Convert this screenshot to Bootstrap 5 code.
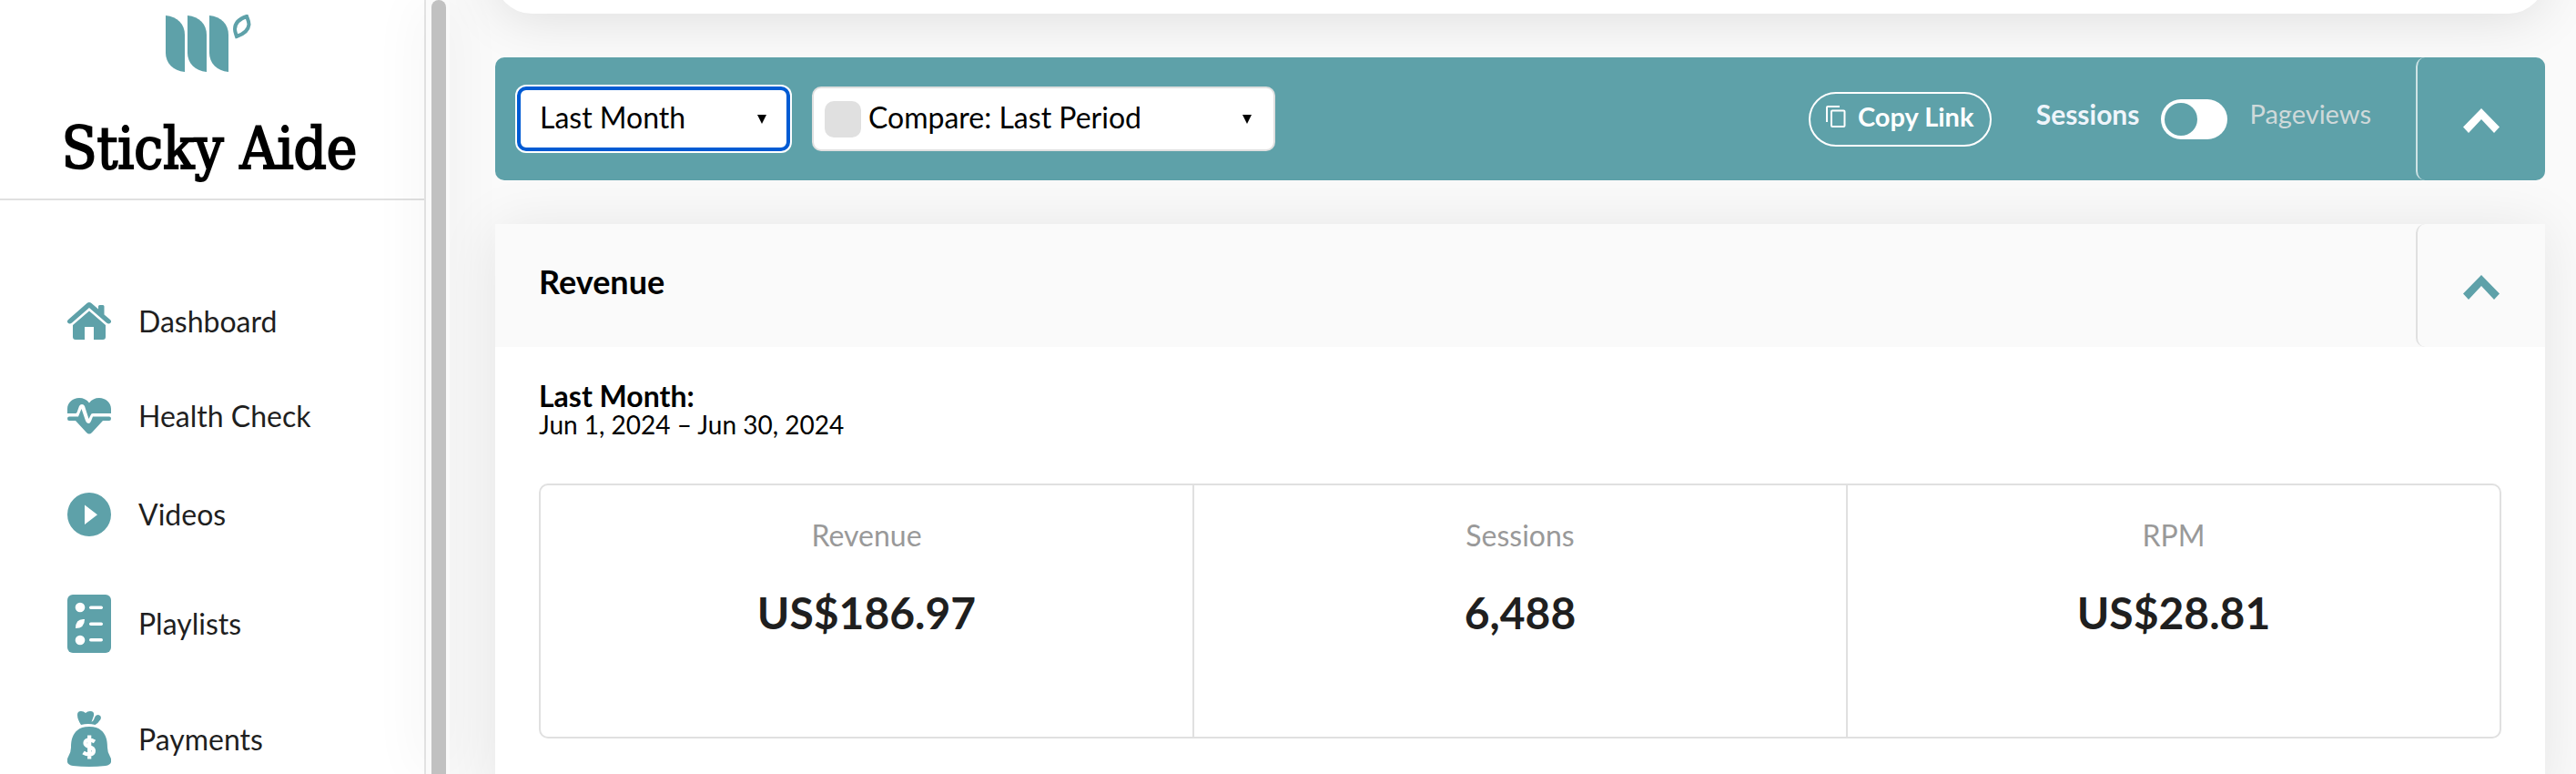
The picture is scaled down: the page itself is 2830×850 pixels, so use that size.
<!DOCTYPE html>
<html lang="en">
<head>
<meta charset="utf-8">
<meta name="viewport" content="width=device-width, initial-scale=1">
<title>Sticky Aide – Dashboard</title>
<link href="https://cdn.jsdelivr.net/npm/bootstrap@5.3.0/dist/css/bootstrap.min.css" rel="stylesheet">
<style>
  :root { --teal: #5ea1a9; --line: #e0e0e0; --ink: #1f1f1f; --soft: #fafafa; }
  body { font-family: Lato, sans-serif; font-size: 32px; line-height: 40px; color: #000; background: var(--soft); }

  /* Sidebar */
  .side { width: 468px; border-right: 2px solid #e5e5e5; }
  .side-head { border-bottom: 2px solid var(--line); padding: 16px 6px 18px 0; }
  .site-name { font: 400 63px/72px "DejaVu Serif Condensed", "DejaVu Serif", serif; -webkit-text-stroke: 2px #000; margin-top: 48px; }
  .side-list { padding: 112px 0 64px 74px; gap: 64px; }
  .side-link { color: var(--ink); text-decoration: none; gap: 30px; padding: 0; }
  .side-link svg { fill: var(--teal); width: 48px; }
  .side-link:hover { color: var(--teal); }
  .track { width: 26px; background: var(--soft); padding: 0 4px 0 6px; box-shadow: 0 0 60px rgba(0,0,0,.07); z-index: 1; }
  .thumb { background: #c1c1c1; border-radius: 8px 8px 0 0; }

  /* Main column */
  .page { padding: 0 34px 0 50px; }
  .raised { background: #fff; box-shadow: 0 4px 60px rgba(0,0,0,.09); }
  .prev-card { height: 80px; margin-top: -65px; border-radius: 40px; box-shadow: 0 4px 60px rgba(0,0,0,.12); }
  .filters { background: var(--teal); color: #fff; border-radius: 10px; margin: 48px 0; min-height: 135px; padding-left: 24px; }
  .pick { appearance: none; height: 71px; border: 2px solid var(--line); border-radius: 10px; color: #000; outline: 0;
    font-size: 32px; line-height: 40px; padding: 0 30px 4px 25px;
    background: #fff url("data:image/svg+xml,%3Csvg xmlns='http://www.w3.org/2000/svg' width='10' height='10'%3E%3Cpath d='M0 0h10L5 10z'/%3E%3C/svg%3E") no-repeat right 24px center; }
  .pick-period { width: 300px; border: 4px solid #005bd3; box-shadow: 0 0 0 2px #fff; padding-left: 21px; background-position: right 22px center; }
  .pick-compare { width: 509px; padding-left: 60px; }
  .swatch { left: 14px; top: 16px; width: 40px; height: 40px; border-radius: 10px; background: var(--line); pointer-events: none; }
  .copy { border: 2px solid #fff; border-radius: 30px; height: 60px; width: 201px; background: none; color: #fff; font-size: 29px; font-weight: 700; line-height: 40px; padding: 0 0 5px; gap: 13px; margin-right: 49px; }
  .mode { font-size: 30px; padding-bottom: 12px; }
  .mode-on { font-weight: 700; color: #eff5fb; }
  .mode-off { font-size: 29px; color: #cfd9da; }
  .flip { appearance: none; width: 73px; height: 44px; border-radius: 22px; background: #fff; margin: 0 24px; padding: 4px; }
  .flip::before { content: ""; display: block; width: 36px; height: 36px; border-radius: 50%; background: var(--teal); }
  .flip:checked::before { margin-left: auto; }
  .fold { width: 142px; border: 0; border-left: 2px solid var(--line); border-radius: 10px; background: none; color: var(--teal); padding: 4px 0 0; }
  .filters .fold { border-left-color: #cfe3e5; color: #fff; margin-left: 49px; }
  .fold svg { fill: currentColor; }

  .panel-head { background: var(--soft); min-height: 135px; padding-left: 48px; }
  .panel-title { font-size: 36px; line-height: 44px; font-weight: 700; padding-bottom: 10px; }
  .panel-body { padding: 38px 48px 64px; }
  .range { margin-bottom: 50px; }
  .range-name { font-weight: 700; line-height: 32px; }
  .range-dates { font-size: 28px; line-height: 30px; }
  .stats { border: 2px solid var(--line); border-radius: 10px; }
  .stat { padding: 35px 16px 106px; }
  .stat + .stat { border-left: 2px solid var(--line); }
  .stat-label { color: #999; margin-bottom: 35px; }
  .stat-value { color: var(--ink); font-size: 48px; line-height: 60px; font-weight: 700; }
</style>
</head>
<body>
<div class="d-flex vh-100 overflow-hidden">
  <aside class="side bg-white flex-shrink-0 overflow-hidden">
    <div class="side-head d-flex flex-column align-items-center">
      <svg width="96" height="64" viewBox="0 0 96 64" fill="#5ea1a9" role="img" aria-label="Logo">
        <path id="leafbar" d="M0 1C13 2 21 11 21 22V63C8 62 0 53 0 42Z"/>
        <use href="#leafbar" x="24"/><use href="#leafbar" x="48"/>
        <path d="M89 2C80 5 76 10 76 16C76 19 77 21 78 24C87 21 91 16 91.500 11C91.500 7 90 5 89 2Z" fill="none" stroke="#5ea1a9" stroke-width="4"/>
      </svg>
      <div class="site-name text-nowrap">Sticky Aide</div>
    </div>
    <nav class="side-list nav flex-column flex-nowrap" aria-label="Main">
      <a class="side-link d-flex align-items-center" href="#dashboard">
        <svg height="41" viewBox="0 0 48 41"><path d="M21.500 1Q24 -1 26.500 1L34 7.500V4.500Q34 3 35.500 3H39Q40.500 3 40.500 4.500V13.500L47 19Q49 21 47.500 22.500Q45.500 24.500 43 22.500L24 6L5 22.500Q2.500 24.500 .5 22.500Q-1 21 1 19Z"/><path d="M24 9.500L42 25V38Q42 41 39 41H29V27H19V41H9Q6 41 6 38V25Z"/></svg>
        Dashboard</a>
      <a class="side-link d-flex align-items-center" href="#health">
        <svg height="40" viewBox="0 0 48 40"><path d="M0 17V12C0 5 6 0 13 0Q20 0 24 5.500Q28 0 35 0C42 0 48 5 48 12V17H28Q26 17 25.500 19L23.500 23L19 9Q18 7 16 7Q14 7 13 9L10.500 16Q10 17 9 17Z"/><path d="M2 20.500H12L15.500 12L20 25Q21 28 23 28Q25 28 26 25.500L28 20.500H46Q48 20.500 48 22.700Q48 25 46 25H39L27 38Q24 41 21 38L9 25H2Q0 25 0 22.700Q0 20.500 2 20.500Z"/></svg>
        Health Check</a>
      <a class="side-link d-flex align-items-center" href="#videos">
        <svg height="48" viewBox="0 0 48 48"><path fill-rule="evenodd" d="M24 0A24 24 0 1 1 24 48A24 24 0 1 1 24 0ZM19 13.500V35L33 24.200Z"/></svg>
        Videos</a>
      <a class="side-link d-flex align-items-center" href="#playlists">
        <svg height="64" viewBox="0 0 48 64"><rect width="48" height="64" rx="6"/><g fill="#fff"><circle cx="14" cy="14" r="5.300"/><circle cx="14" cy="50" r="5.300"/><path d="M19 27Q9 26 9 37Q19 37 19 27Z"/><rect x="24" y="12.500" width="15" height="3.500" rx="1.700"/><rect x="24" y="30.500" width="15" height="3.500" rx="1.700"/><rect x="24" y="48" width="15" height="3.500" rx="1.700"/></g></svg>
        Playlists</a>
      <a class="side-link d-flex align-items-center" href="#payments">
        <svg height="61" viewBox="0 0 48 61"><path d="M15 15Q11 9 11 4Q11 0 15 0Q18 0 20 2Q22 0 25 0Q30 0 29 5L26.500 12Q29.500 10 30 7Q31 4 34 4Q38 5 36.500 9Q34 13 30.500 15Q23 13 15 15Z"/><path d="M24 17Q33 17 37 21C42 25 44 31 44 40Q44 45 47 50Q51 58 42 60Q24 62 6 60Q-3 58 1 50Q4 45 4 40C4 31 6 25 11 21Q15 17 24 17Z"/><path d="M30 33.500Q27 31.500 24 31.500Q19.500 31.500 19.500 35Q19.500 37.500 24 39Q29 40.500 29 43.500Q29 47.500 24 47.500Q20.500 47.500 17.500 45.500M24.200 26.500V52.500" fill="none" stroke="#fff" stroke-width="4.200"/></svg>
        Payments</a>
    </nav>
  </aside>
  <div class="track d-flex flex-shrink-0" aria-hidden="true"><div class="thumb w-100"></div></div>

  <main class="page flex-grow-1 overflow-hidden">
    <div class="raised prev-card"></div>

    <section class="filters d-flex align-items-stretch" aria-label="Report filters">
      <div class="d-flex align-items-center gap-4">
        <select class="pick pick-period" aria-label="Period"><option>Last Month</option><option>This Month</option></select>
        <div class="position-relative d-flex">
          <select class="pick pick-compare" aria-label="Comparison"><option>Compare: Last Period</option><option>Compare: Last Year</option></select>
          <span class="swatch position-absolute"></span>
        </div>
      </div>
      <div class="d-flex align-items-center ms-auto">
        <button type="button" class="copy d-flex align-items-center justify-content-center">
          <svg width="22" height="24" viewBox="0 0 22 24" fill="none" stroke="#fff" stroke-width="2"><path d="M1 18V2Q1 1 2 1H15"/><rect x="6" y="5.500" width="14.500" height="17.500" rx="1"/></svg>
          Copy Link</button>
        <label class="mode mode-on" for="metric">Sessions</label>
        <input class="flip" type="checkbox" role="switch" id="metric">
        <label class="mode mode-off" for="metric">Pageviews</label>
      </div>
      <button type="button" class="fold d-flex align-items-center justify-content-center" aria-label="Collapse filters">
        <svg width="40" height="27" viewBox="0 0 40 27"><path d="M20 0L40 20.500L34 27L20 12L6 27L0 20.500Z"/></svg>
      </button>
    </section>

    <section class="raised">
      <div class="panel-head d-flex align-items-stretch justify-content-between">
        <h2 class="panel-title m-0 align-self-center">Revenue</h2>
        <button type="button" class="fold d-flex align-items-center justify-content-center" aria-label="Collapse revenue">
          <svg width="40" height="27" viewBox="0 0 40 27"><path d="M20 0L40 20.500L34 27L20 12L6 27L0 20.500Z"/></svg>
        </button>
      </div>
      <div class="panel-body">
        <div class="range"><div class="range-name">Last Month:</div><div class="range-dates">Jun 1, 2024 – Jun 30, 2024</div></div>
        <div class="stats row g-0 text-center">
          <div class="stat col"><div class="stat-label">Revenue</div><div class="stat-value">US$186.97</div></div>
          <div class="stat col"><div class="stat-label">Sessions</div><div class="stat-value">6,488</div></div>
          <div class="stat col"><div class="stat-label">RPM</div><div class="stat-value">US$28.81</div></div>
        </div>
      </div>
    </section>
  </main>
</div>
<script src="https://cdn.jsdelivr.net/npm/bootstrap@5.3.0/dist/js/bootstrap.bundle.min.js"></script>
</body>
</html>
